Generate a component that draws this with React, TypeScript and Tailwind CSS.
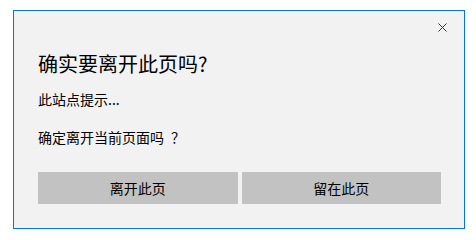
// Leave-page confirm dialog

export default function App() {
  return (
    <div
      className="w-[476px] h-[239px] bg-white pt-[10px] pl-[13px] text-black"
      style={{ fontFamily: '"Noto Sans CJK SC", "Noto Sans", sans-serif' }}
    >
      <div className="w-[452px] h-[219px] border border-[#0078d7] bg-[#f2f2f2] flex flex-col">
        {/* Close */}
        <div className="flex justify-end pt-[12px] pr-[17px]">
          <button className="w-[9px] h-[9px] flex items-center justify-center" aria-label="close">
            <svg width="9" height="9" viewBox="0 0 9 9" fill="none">
              <path d="M0.5 0.5L8.5 8.5M8.5 0.5L0.5 8.5" stroke="#333" strokeWidth="1" />
            </svg>
          </button>
        </div>

        <div className="pl-6 pr-[23px] flex flex-col">
          <h1 className="mt-[18px] text-[20px] leading-[28px] font-normal">确实要离开此页吗?</h1>
          <p className="mt-[11px] text-[14px] leading-[20px]">此站点提示...</p>
          <p className="mt-[18px] text-[14px] leading-[20px]">
            确定离开当前页面吗<span className="ml-[7px]">？</span>
          </p>

          {/* Buttons */}
          <div className="mt-[25px] grid grid-cols-2 gap-1">
            <button className="h-8 bg-[#c2c2c2] text-[14px] leading-[20px]">离开此页</button>
            <button className="h-8 bg-[#c2c2c2] text-[14px] leading-[20px]">留在此页</button>
          </div>
        </div>
      </div>
    </div>
  )
}
